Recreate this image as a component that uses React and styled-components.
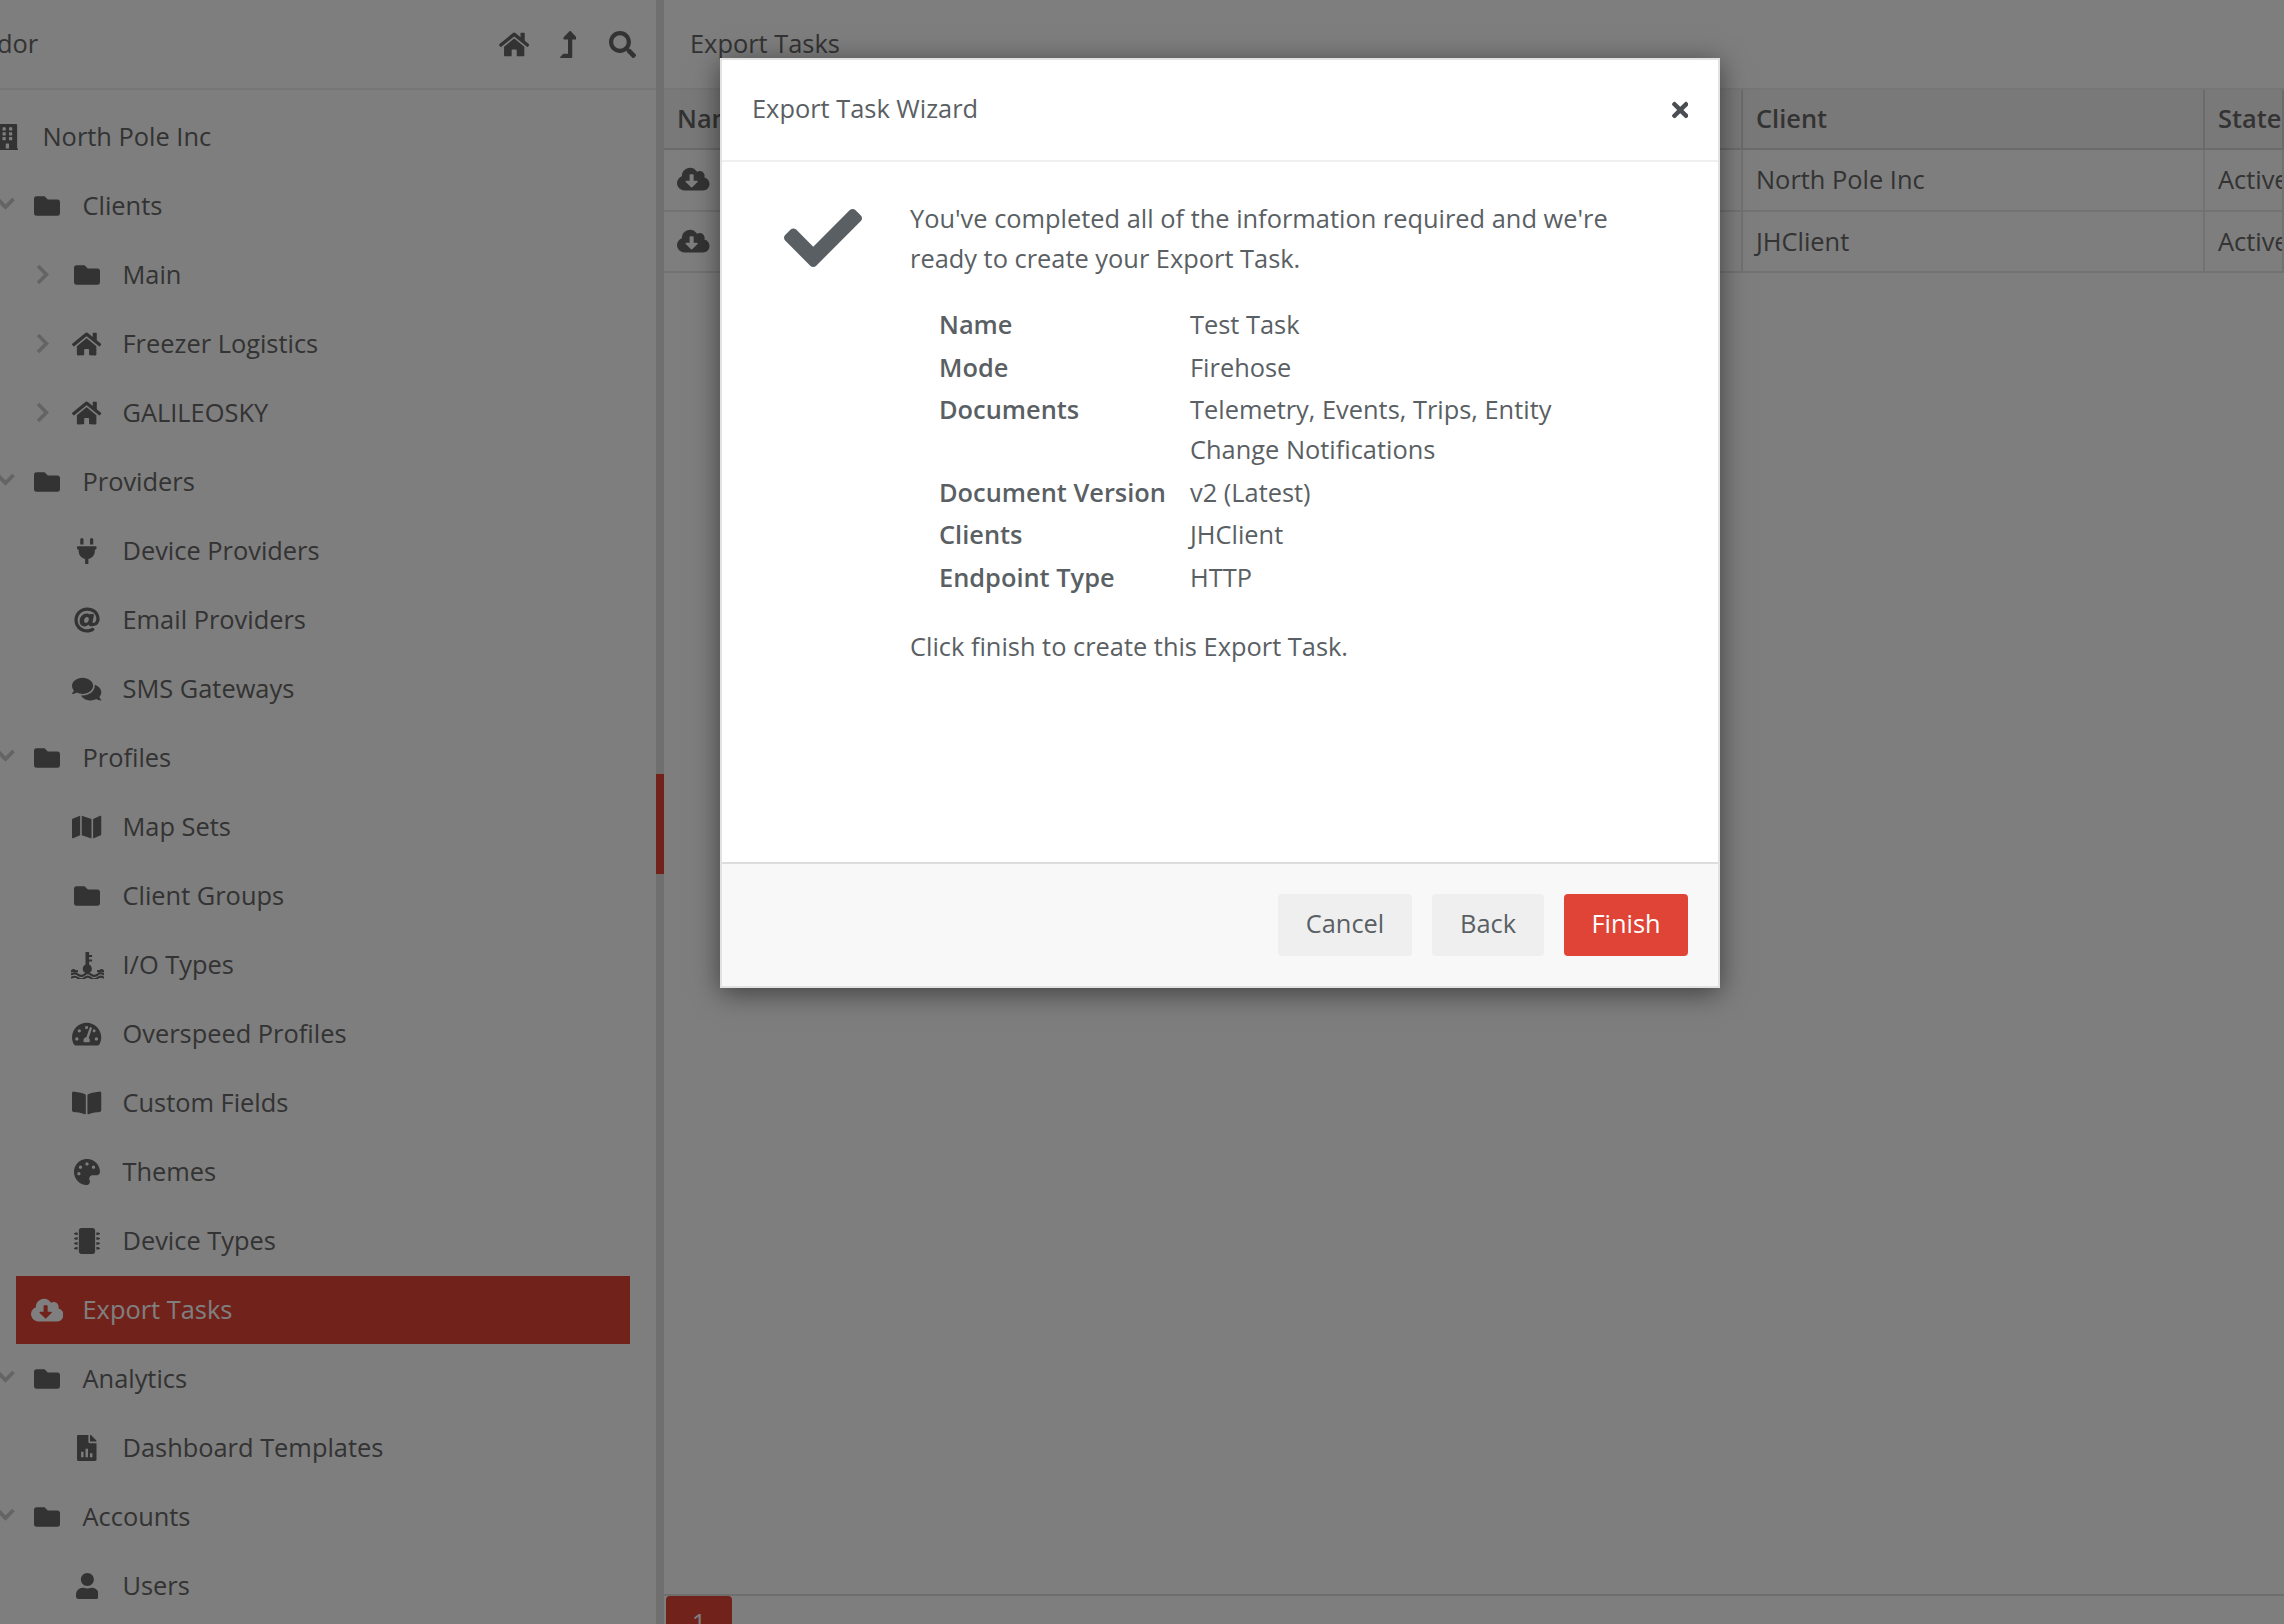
import React from "react";
import styled, { createGlobalStyle, css } from "styled-components";
import {
  FaHome, FaLevelUpAlt, FaSearch, FaBuilding, FaFolder, FaPlug, FaAt, FaComments, FaMap,
  FaTachometerAlt, FaBookOpen, FaPalette, FaMicrochip, FaCloudDownloadAlt, FaUser, FaCheck, FaTimes,
} from "react-icons/fa";

const FONT = `"Open Sans", "Noto Sans", sans-serif`;
const INK = "#666";
const MODAL_INK = "#5a5f64";

/* Font Awesome glyphs keep their own proportions at a height of 1em. */
const glyph = css`
  svg {
    height: 1em;
    width: 1em;
    flex: none;
  }
  svg[viewBox="0 0 640 512"] { width: 1.25em; }
  svg[viewBox="0 0 576 512"] { width: 1.125em; }
  svg[viewBox="0 0 448 512"] { width: 0.875em; }
  svg[viewBox="0 0 384 512"] { width: 0.75em; }
  svg[viewBox="0 0 352 512"] { width: 0.6875em; }
  svg[viewBox="0 0 320 512"] { width: 0.625em; }
`;

const Global = createGlobalStyle`
  html, body { margin: 0; padding: 0; height: 100%; overflow: hidden; background: #fcfcfc; }
  body { font-family: ${FONT}; font-size: 25.4px; color: ${INK}; }
  svg { display: block; }
`;

const Page = styled.div`
  display: flex;
  width: 2284px;
  height: 1624px;
  overflow: hidden;
  position: relative;
`;

const Sidebar = styled.aside`
  flex: none;
  width: 716px;
  margin-left: -60px;
  height: 100%;
  display: flex;
  flex-direction: column;
  background: #fcfcfc;
`;

const SideHeader = styled.header`
  flex: none;
  height: 88px;
  border-bottom: 2px solid #ececec;
  display: flex;
  align-items: center;
  justify-content: space-between;
  padding: 0 7px 0 12px;
`;

const SideTitle = styled.span`
  padding-bottom: 3px;
`;

const ToolGroup = styled.div`
  display: flex;
`;

const ToolButton = styled.span`
  width: 54px;
  display: flex;
  justify-content: center;
  font-size: 27px;
  color: ${INK};
  ${glyph}
`;

const Tree = styled.nav`
  padding: 13px 26px 0 0;
`;

const Row = styled.div`
  display: flex;
  height: 69px;
  padding-left: ${(p) => 12 + p.$level * 40}px;
`;

const Toggle = styled.span`
  flex: none;
  width: 24px;
  padding-left: 4px;
  box-sizing: border-box;
  display: flex;
  align-items: center;
  color: #c8c8c8;
`;

const RowBody = styled.div`
  flex: 1;
  height: 68px;
  display: flex;
  align-items: center;
  padding-left: 16px;
  background: ${(p) => (p.$active ? "#e04436" : "transparent")};
  color: ${(p) => (p.$active ? "#fff" : INK)};
`;

const IconSlot = styled.span`
  flex: none;
  width: 30px;
  display: flex;
  justify-content: center;
  margin-right: 20.5px;
  font-size: 26px;
  ${glyph}
`;

const RowLabel = styled.span`
  white-space: nowrap;
  padding-bottom: 3px;
`;

const ScrollTrack = styled.div`
  flex: none;
  width: 8px;
  height: 100%;
  background: #dedede;
  position: relative;
`;

const ScrollThumb = styled.div`
  position: absolute;
  left: 0;
  top: 774px;
  width: 100%;
  height: 100px;
  background: #e04436;
`;

const Main = styled.main`
  flex: 1;
  min-width: 0;
  display: flex;
  flex-direction: column;
  background: #fcfcfc;
`;

const MainHeader = styled.header`
  flex: none;
  height: 85px;
  border-bottom: 2px solid #ececec;
  display: flex;
  align-items: center;
  padding: 0 0 3px 26px;
`;

const Table = styled.div`
  flex: 1;
  display: flex;
  flex-direction: column;
`;

const TableRow = styled.div`
  display: grid;
  grid-template-columns: 1079px 462px 1fr;
  height: ${(p) => p.$h}px;
  flex: none;
  background: ${(p) => (p.$head ? "#f3f3f3" : "transparent")};
  border-bottom: 2px solid ${(p) => (p.$head ? "#d6d6d6" : "#e4e4e4")};
`;

const Cell = styled.div`
  display: flex;
  align-items: center;
  padding: 0 0 2px 13px;
  white-space: nowrap;
  overflow: hidden;
  font-weight: ${(p) => (p.$head ? 600 : 400)};
  border-right: 2px solid ${(p) => (p.$head ? "#d6d6d6" : "#e4e4e4")};
`;

const RowIcon = styled.span`
  font-size: 26px;
  ${glyph}
`;

const Pager = styled.footer`
  flex: none;
  height: 28px;
  border-top: 2px solid #dcdcdc;
  overflow: hidden;
`;

const PageNumber = styled.span`
  display: flex;
  align-items: center;
  justify-content: center;
  width: 66px;
  height: 52px;
  margin-left: 2px;
  border-radius: 4px;
  background: #e04436;
  color: #fff;
`;

const Backdrop = styled.div`
  position: absolute;
  inset: 0;
  background: rgba(0, 0, 0, 0.5);
`;

const Modal = styled.section`
  position: absolute;
  left: 720px;
  top: 58px;
  width: 1000px;
  height: 930px;
  box-sizing: border-box;
  border: 2px solid #e2e2e2;
  background: #fff;
  color: ${MODAL_INK};
  display: flex;
  flex-direction: column;
  box-shadow: 0 5px 26px rgba(0, 0, 0, 0.5);
`;

const ModalHeader = styled.header`
  flex: none;
  height: 100px;
  border-bottom: 2px solid #efefef;
  display: flex;
  align-items: center;
  justify-content: space-between;
  padding: 0 30px;
`;

const ModalTitle = styled.span`
  padding-bottom: 4px;
`;

const CloseIcon = styled.span`
  color: #4a4e52;
  font-size: 24px;
  ${glyph}
`;

const ModalBody = styled.div`
  flex: 1;
  display: flex;
  align-items: flex-start;
  padding: 36px 0 0 62px;
`;

const BigCheck = styled.span`
  flex: none;
  width: 78px;
  margin: 1px 48px 0 0;
  font-size: 78px;
  line-height: 0;
  ${glyph}
`;

const Copy = styled.div`
  line-height: 40px;
`;

const Paragraph = styled.p`
  margin: 0;
`;

const Summary = styled.dl`
  display: grid;
  grid-template-columns: 251px 375px;
  row-gap: 2.6px;
  margin: 26px 0 29px 29px;
`;

const Term = styled.dt`
  font-weight: 600;
`;

const Value = styled.dd`
  margin: 0;
`;

const ModalFooter = styled.footer`
  flex: none;
  height: 124px;
  box-sizing: border-box;
  border-top: 2px solid #ddd;
  background: #f8f8f8;
  display: flex;
  align-items: center;
  justify-content: flex-end;
  gap: 20px;
  padding-right: 30px;
`;

const Button = styled.button`
  height: 62px;
  width: ${(p) => p.$w}px;
  border: 0;
  padding: 0 0 4px;
  border-radius: 4px;
  font: inherit;
  background: ${(p) => (p.$primary ? "#e04436" : "#efefef")};
  color: ${(p) => (p.$primary ? "#fff" : MODAL_INK)};
`;

const Chevron = ({ down }) =>
  down ? (
    <svg width="19" height="13" viewBox="0 0 19 13" fill="none" stroke="currentColor" strokeWidth="3.8" style={{ marginTop: -6 }}>
      <path d="M1.5 2 L9.5 10 L17.5 2" />
    </svg>
  ) : (
    <svg width="13" height="21" viewBox="0 0 13 21" fill="none" stroke="currentColor" strokeWidth="3.6" style={{ marginTop: -3 }}>
      <path d="M2 2 L10.500 10.500 L2 19" />
    </svg>
  );

const CoolantIcon = () => (
  <svg viewBox="0 0 33 27" style={{ height: 27, width: 33 }} fill="currentColor">
    <path d="M14.500 0h3.600v3h3v2h-3v2.400h3v2h-3v3.200a4.600 4.600 0 1 1-3.600 0z" />
    <path d="M0 18.200c2-1.600 3-1.600 5 0l2-.2v2c-2 1.200-3.600 .8-5 -.2-.7 .4-1.300 .6-2 .6z" />
    <path d="M33 18.200c-2-1.600-3-1.600-5 0l-2-.2v2c2 1.200 3.600 .8 5-.2 .7 .4 1.300 .6 2 .6z" />
    <g fill="none" stroke="currentColor" strokeWidth="2.100">
      <path d="M0 22.600c2.700-1.800 4.800-1.800 7 0s4.300 1.800 6.500 0 4.300-1.800 6.500 0 4.300 1.800 6.500 0 4.300-1.800 6.500 0" />
      <path d="M0 26c2.700-1.800 4.800-1.800 7 0s4.300 1.800 6.500 0 4.300-1.800 6.500 0 4.300 1.800 6.500 0 4.300-1.800 6.500 0" />
    </g>
  </svg>
);

const ReportIcon = () => (
  <svg viewBox="0 0 384 512" fill="currentColor" fillRule="evenodd">
    <path d="M224 136V0H24C10.700 0 0 10.700 0 24v464c0 13.300 10.700 24 24 24h336c13.300 0 24-10.700 24-24V160H248c-13.200 0-24-10.800-24-24zM80 330h48v110H80zM168 270h48v170h-48zM256 360h48v80h-48z" />
    <path d="M384 121.900v6.100H256V0h6.100c6.400 0 12.500 2.500 17 7l97.900 98c4.500 4.500 7 10.600 7 16.900z" />
  </svg>
);

const tree = [
  { label: "North Pole Inc", icon: <FaBuilding />, level: 0 },
  { label: "Clients", icon: <FaFolder />, level: 1, toggle: "down" },
  { label: "Main", icon: <FaFolder />, level: 2, toggle: "right" },
  { label: "Freezer Logistics", icon: <FaHome />, level: 2, toggle: "right" },
  { label: "GALILEOSKY", icon: <FaHome />, level: 2, toggle: "right" },
  { label: "Providers", icon: <FaFolder />, level: 1, toggle: "down" },
  { label: "Device Providers", icon: <FaPlug />, level: 2 },
  { label: "Email Providers", icon: <FaAt />, level: 2 },
  { label: "SMS Gateways", icon: <FaComments />, level: 2 },
  { label: "Profiles", icon: <FaFolder />, level: 1, toggle: "down" },
  { label: "Map Sets", icon: <FaMap />, level: 2 },
  { label: "Client Groups", icon: <FaFolder />, level: 2 },
  { label: "I/O Types", icon: <CoolantIcon />, level: 2 },
  { label: "Overspeed Profiles", icon: <FaTachometerAlt />, level: 2 },
  { label: "Custom Fields", icon: <FaBookOpen />, level: 2 },
  { label: "Themes", icon: <FaPalette />, level: 2 },
  { label: "Device Types", icon: <FaMicrochip />, level: 2 },
  { label: "Export Tasks", icon: <FaCloudDownloadAlt />, level: 1, active: true },
  { label: "Analytics", icon: <FaFolder />, level: 1, toggle: "down" },
  { label: "Dashboard Templates", icon: <ReportIcon />, level: 2 },
  { label: "Accounts", icon: <FaFolder />, level: 1, toggle: "down" },
  { label: "Users", icon: <FaUser />, level: 2 },
];

const summary = [
  ["Name", "Test Task"],
  ["Mode", "Firehose"],
  ["Documents", "Telemetry, Events, Trips, Entity Change Notifications"],
  ["Document Version", "v2 (Latest)"],
  ["Clients", "JHClient"],
  ["Endpoint Type", "HTTP"],
];

export default function App() {
  return (
    <Page>
      <Global />
      <Sidebar>
        <SideHeader>
          <SideTitle>Vendor</SideTitle>
          <ToolGroup>
            <ToolButton><FaHome /></ToolButton>
            <ToolButton><FaLevelUpAlt /></ToolButton>
            <ToolButton><FaSearch /></ToolButton>
          </ToolGroup>
        </SideHeader>
        <Tree>
          {tree.map((item) => (
            <Row key={item.label} $level={item.level}>
              <Toggle>{item.toggle && <Chevron down={item.toggle === "down"} />}</Toggle>
              <RowBody $active={item.active}>
                <IconSlot>{item.icon}</IconSlot>
                <RowLabel>{item.label}</RowLabel>
              </RowBody>
            </Row>
          ))}
        </Tree>
      </Sidebar>
      <ScrollTrack><ScrollThumb /></ScrollTrack>
      <Main>
        <MainHeader>Export Tasks</MainHeader>
        <Table>
          <TableRow $head $h={58}>
            <Cell $head>Name</Cell>
            <Cell $head>Client</Cell>
            <Cell $head>State</Cell>
          </TableRow>
          <TableRow $h={60}>
            <Cell><RowIcon><FaCloudDownloadAlt /></RowIcon></Cell>
            <Cell>North Pole Inc</Cell>
            <Cell>Active</Cell>
          </TableRow>
          <TableRow $h={59}>
            <Cell><RowIcon><FaCloudDownloadAlt /></RowIcon></Cell>
            <Cell>JHClient</Cell>
            <Cell>Active</Cell>
          </TableRow>
        </Table>
        <Pager><PageNumber>1</PageNumber></Pager>
      </Main>
      <Backdrop />
      <Modal>
        <ModalHeader>
          <ModalTitle>Export Task Wizard</ModalTitle>
          <CloseIcon><FaTimes /></CloseIcon>
        </ModalHeader>
        <ModalBody>
          <BigCheck><FaCheck /></BigCheck>
          <Copy>
            <Paragraph>You've completed all of the information required and we're<br />ready to create your Export Task.</Paragraph>
            <Summary>
              {summary.map(([term, value]) => (
                <React.Fragment key={term}>
                  <Term>{term}</Term>
                  <Value>{value}</Value>
                </React.Fragment>
              ))}
            </Summary>
            <Paragraph>Click finish to create this Export Task.</Paragraph>
          </Copy>
        </ModalBody>
        <ModalFooter>
          <Button $w={134}>Cancel</Button>
          <Button $w={112}>Back</Button>
          <Button $w={124} $primary>Finish</Button>
        </ModalFooter>
      </Modal>
    </Page>
  );
}
